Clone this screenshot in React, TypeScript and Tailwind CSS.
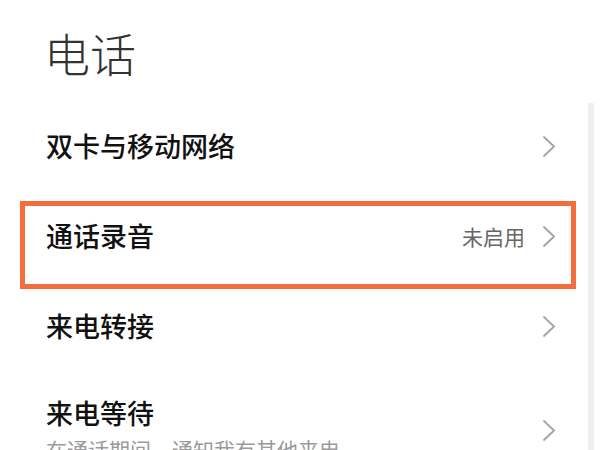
const FONT = "font-['Noto_Sans_CJK_SC','Noto_Sans',sans-serif]"

function Chevron() {
  return (
    <svg width="12" height="21" viewBox="0 0 12 21" aria-hidden="true" className="shrink-0">
      <polyline points="1,1 11,10.5 1,20" fill="none" stroke="#a3a3a3" strokeWidth="1.8" strokeLinejoin="round" strokeLinecap="round" />
    </svg>
  )
}

type Row = { title: string; value?: string; subtitle?: string }

const ROWS: Row[] = [
  { title: '双卡与移动网络' },
  { title: '通话录音', value: '未启用' },
  { title: '来电转接' },
  { title: '来电等待', subtitle: '在通话期间，通知我有其他来电' },
]

export default function App() {
  return (
    <div className={`relative h-[450px] w-[600px] overflow-hidden bg-white ${FONT}`}>
      <header className="h-[101px] pl-[44px] pt-[29px]">
        <h1 className="text-[46px] font-light leading-[46px] text-[#333333]">电话</h1>
      </header>

      <ul>
        {ROWS.map((row) => (
          <li
            key={row.title}
            className={`flex items-center justify-between pl-[46px] pr-[45px] ${row.subtitle ? 'h-[118px]' : 'h-[90px]'}`}
          >
            <div className="flex flex-col">
              <span className="text-[27px] font-medium leading-[34px] text-[#111111]">{row.title}</span>
              {row.subtitle && (
                <span className="mt-[4px] whitespace-nowrap text-[21px] leading-[30px] text-[#9a9a9a]">{row.subtitle}</span>
              )}
            </div>
            <div className="flex items-center gap-[18px]">
              {row.value && <span className="text-[21px] leading-none text-[#666666]">{row.value}</span>}
              <Chevron />
            </div>
          </li>
        ))}
      </ul>

      {/* annotation box */}
      <div className="absolute left-[20px] top-[201px] h-[88px] w-[556px] border-[5px] border-[#f46d3d]" />

      {/* scrollbar */}
      <div className="absolute right-[6px] top-[103px] h-[347px] w-[6px] bg-[#efefef]" />
    </div>
  )
}
